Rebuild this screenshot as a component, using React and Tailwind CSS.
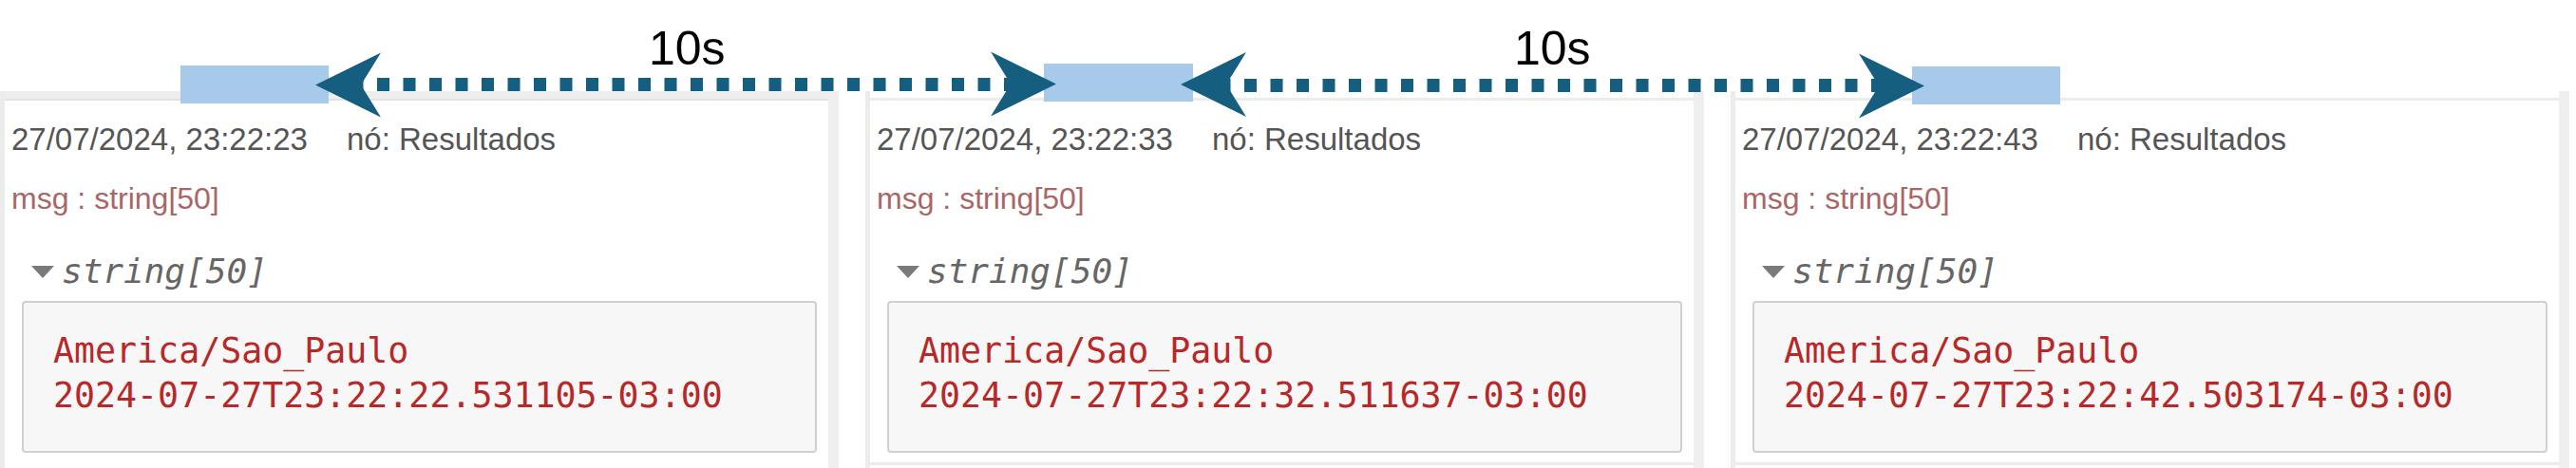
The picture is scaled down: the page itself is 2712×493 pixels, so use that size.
const panels = [
  { date: "27/07/2024, 23:22:23", iso: "2024-07-27T23:22:22.531105-03:00", first: true },
  { date: "27/07/2024, 23:22:33", iso: "2024-07-27T23:22:32.511637-03:00" },
  { date: "27/07/2024, 23:22:43", iso: "2024-07-27T23:22:42.503174-03:00", last: true },
];

const sans = "font-['Liberation_Sans',Arial,sans-serif]";
const mono = "font-['DejaVu_Sans_Mono','Liberation_Mono',monospace]";

function DebugPanel({ date, iso, first }) {
  return (
    <div className="w-[883px] h-full shrink-0 flex">
      <div className="w-[5px] bg-[#ececec]" />
      <div className="flex-1 flex flex-col">
        <div
          className={
            first
              ? "h-[10px] bg-[#eeeeee] border-b-2 border-[#e2e2e2]"
              : "h-[10px] border-b-[3px] border-[#ececec]"
          }
        />
        <div className={`${sans} text-[33px] leading-[40px] text-[#555] mt-[21px] ml-[7px] whitespace-nowrap`}>
          <span>{date}</span>
          <span className="ml-[41px]">nó: Resultados</span>
        </div>
        <div className={`${sans} text-[32px] leading-[40px] text-[#aa6666] mt-[22px] ml-[7px] whitespace-nowrap`}>
          msg : string[50]
        </div>
        <div className="flex items-center mt-[37px] ml-[28px] h-[40px]">
          <svg width="24" height="13" viewBox="0 0 24 13" className="mr-[8px]">
            <polygon points="0,0 24,0 12,13" fill="#7a7a7a" />
          </svg>
          <span className={`${mono} italic text-[36px] leading-[40px] text-[#666]`}>string[50]</span>
        </div>
        <div className="mt-[11px] ml-[18px] mr-[12px] h-[160px] box-border border-2 border-[#d0d0d0] rounded-[4px] bg-[#f7f7f7] pl-[31px] pt-[27px]">
          <div className={`${mono} text-[36.6px] leading-[47px] text-[#b72828] whitespace-pre`}>
            {"America/Sao_Paulo\n" + iso}
          </div>
        </div>
        {!first && <div className="mt-[10px] border-t-[3px] border-[#ebebeb]" />}
      </div>
      <div className="w-[11px] bg-[#efefef]" />
    </div>
  );
}

function Head({ tip, y, dir }) {
  // stealth arrow head; dir -1 points left, 1 points right
  const b = tip - dir * 69;
  const n = tip - dir * 48;
  return (
    <polygon
      points={`${tip},${y} ${b},${y - 34} ${n},${y} ${b},${y + 34}`}
      fill="#155e80"
    />
  );
}

function Annotations() {
  return (
    <div className="absolute inset-0 pointer-events-none">
      <div className="absolute left-[190px] top-[69px] w-[156px] h-[40px] bg-[#a7c9ea]" />
      <div className="absolute left-[1099px] top-[67px] w-[157px] h-[40px] bg-[#a7c9ea]" />
      <div className="absolute left-[2013px] top-[70px] w-[156px] h-[40px] bg-[#a7c9ea]" />
      <svg className="absolute left-0 top-0" width="2712" height="140">
        <line x1="369.5" y1="89" x2="1066" y2="89" stroke="#155e80" strokeWidth="14" strokeDasharray="13 14.5" />
        <line x1="1282.5" y1="90" x2="1978" y2="90" stroke="#155e80" strokeWidth="14" strokeDasharray="13 14.5" />
        <Head tip={332} y={89.5} dir={-1} />
        <Head tip={1112} y={88.5} dir={1} />
        <Head tip={1243} y={89} dir={-1} />
        <Head tip={2026} y={90.5} dir={1} />
      </svg>
      <div className={`absolute left-[683px] top-[26px] ${sans} text-[50px] leading-[50px] text-black`}>10s</div>
      <div className={`absolute left-[1594px] top-[26px] ${sans} text-[50px] leading-[50px] text-black`}>10s</div>
    </div>
  );
}

export default function App() {
  return (
    <div className="relative w-[2712px] h-[493px] overflow-hidden bg-white">
      <div className="flex gap-[28px] pt-[96px] h-full">
        {panels.map((p) => (
          <DebugPanel key={p.date} {...p} />
        ))}
      </div>
      <Annotations />
    </div>
  );
}
